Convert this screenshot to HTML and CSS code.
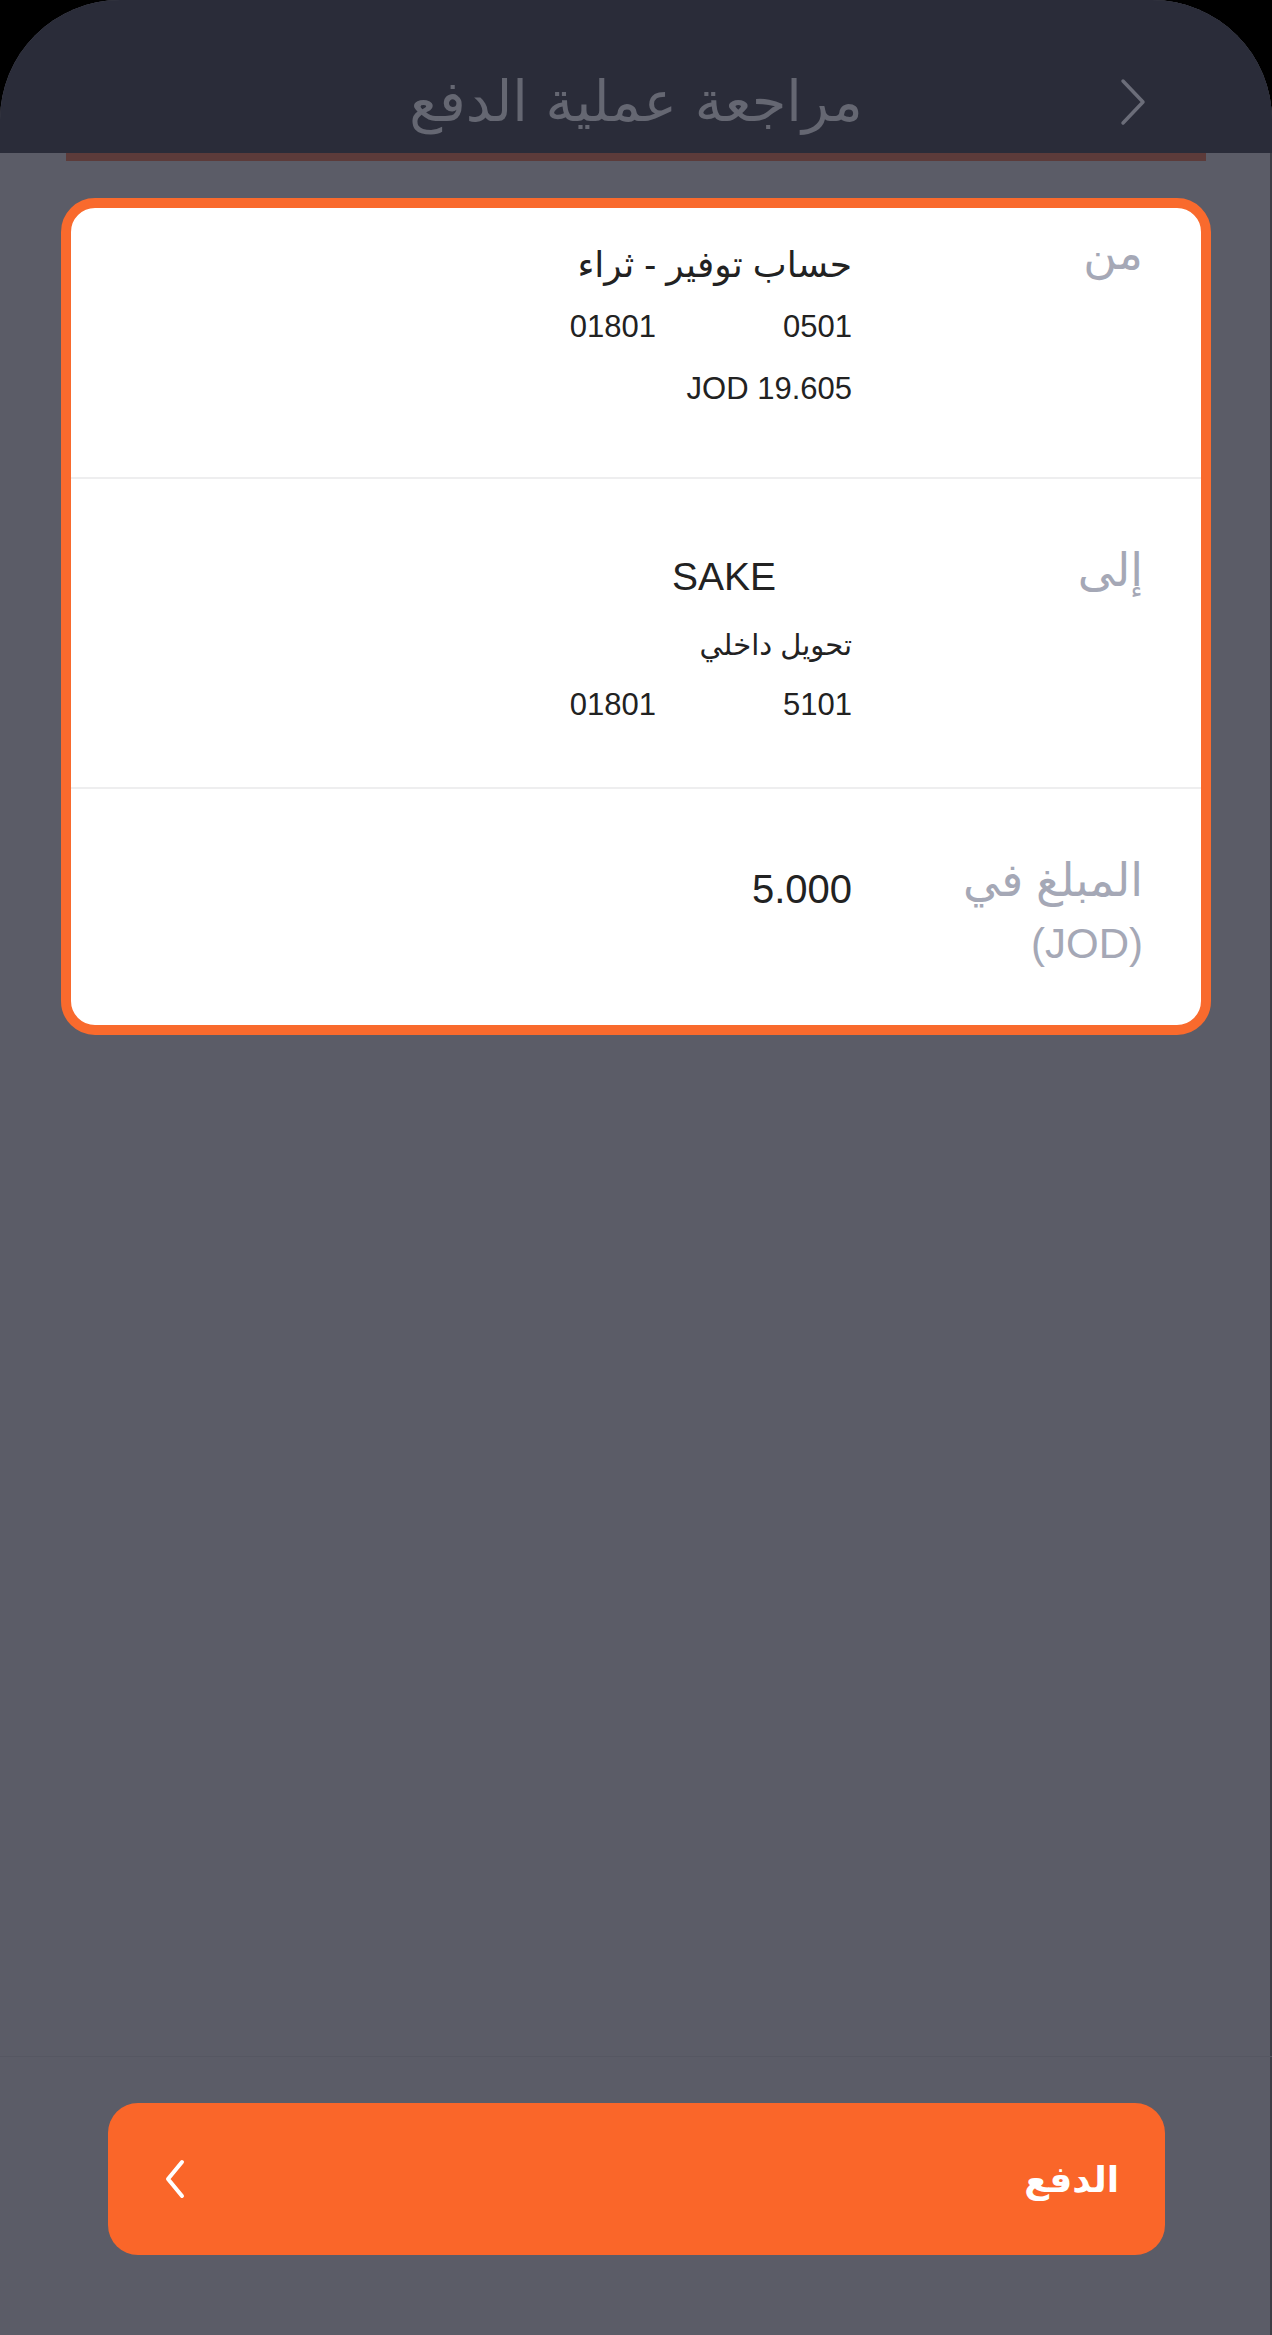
FILE: index.html
```html
<!DOCTYPE html>
<html lang="ar" dir="rtl">
<head>
    <meta charset="UTF-8">
    <meta name="viewport" content="width=device-width, initial-scale=1.0">
    <title>مراجعة عملية الدفع</title>
    <link rel="stylesheet" href="styles.css">
</head>
<body>
    <div class="phone">
        <header class="topbar">
            <span class="topbar-back">
                <svg width="30" height="50" viewBox="0 0 30 50">
                    <path d="M5 4 L25 25 L5 46" fill="none" stroke="#6b6d79" stroke-width="3.5" stroke-linecap="round" stroke-linejoin="round"/>
                </svg>
            </span>
            <h1 class="topbar-title">مراجعة عملية الدفع</h1>
            <span></span>
        </header>
        <div class="topbar-line"></div>

        <main class="content">
            <section class="review-card">
                <div class="review-row">
                    <div class="review-label label-from">من</div>
                    <div class="review-value">
                        <p class="line line-ar">حساب توفير - ثراء</p>
                        <p class="line acct"><span class="acct-branch">0501</span><span>01801</span></p>
                        <p class="line"><span dir="ltr">JOD 19.605</span></p>
                    </div>
                </div>

                <div class="review-row row-to">
                    <div class="review-label label-big">إلى</div>
                    <div class="review-value">
                        <p class="line line-name"><span class="hidden-name"></span><span dir="ltr">SAKE</span></p>
                        <p class="line line-small">تحويل داخلي</p>
                        <p class="line acct"><span class="acct-branch">5101</span><span>01801</span></p>
                    </div>
                </div>

                <div class="review-row row-amount">
                    <div class="review-label label-wrap">المبلغ في <span class="label-cur">(JOD)</span></div>
                    <div class="review-value">
                        <p class="line amount">5.000</p>
                    </div>
                </div>
            </section>
        </main>

        <footer class="pay-bar">
            <button class="pay-btn">
                <span>الدفع</span>
                <svg width="22" height="40" viewBox="0 0 22 40">
                    <path d="M18 3 L4 20 L18 37" fill="none" stroke="#ffffff" stroke-width="4" stroke-linecap="round" stroke-linejoin="round"/>
                </svg>
            </button>
        </footer>
    </div>
</body>
</html>
```

FILE: styles.css
```css
html {
    background-color: #000;
}

body {
    margin: 0;
    padding: 0;
    font-family: "Liberation Sans", "DejaVu Sans", sans-serif;
    background-color: #000;
}

.phone {
    height: 2335px;
    display: flex;
    flex-direction: column;
    background-color: #5b5c67;
    border-radius: 120px 120px 0 0;
    overflow: hidden;
    box-shadow: inset -2px 0 0 #3c3d45;
}

/* header */

.topbar {
    height: 153px;
    box-sizing: border-box;
    padding-top: 50px;
    background-color: #2a2c39;
    display: grid;
    grid-template-columns: 1fr auto 1fr;
    align-items: center;
}

.topbar-back {
    display: flex;
    padding-right: 124px;
}

.topbar-title {
    margin: 0;
    font-family: "DejaVu Sans", sans-serif;
    font-weight: normal;
    font-size: 56px;
    color: #656772;
    line-height: 70px;
}

.topbar-line {
    height: 8px;
    margin: 0 66px;
    background-color: #5c3b3a;
}

/* card */

.content {
    flex: 1;
    padding: 37px 61px 0;
}

.review-card {
    background-color: #fff;
    border: 10px solid #f96a2d;
    border-radius: 34px;
}

.review-row {
    display: grid;
    grid-template-columns: 291px 1fr;
    padding: 26px 58px 57px 20px;
}

.row-to {
    border-top: 2px solid #eeeeef;
    padding-top: 60px;
    padding-bottom: 52px;
}

.row-amount {
    border-top: 2px solid #eeeeef;
    padding-top: 60px;
    padding-bottom: 50px;
}

.review-label {
    font-size: 46px;
    line-height: 62px;
    color: #a5a8b6;
}

.label-from {
    margin-top: -12px;
}

.label-big {
    line-height: 76px;
    margin-top: -7px;
}

.label-wrap {
    max-width: 200px;
}

.label-cur {
    font-size: 42px;
}

.review-value {
    color: #222;
}

.line {
    margin: 0;
    font-size: 31px;
    line-height: 62px;
}

.line-ar {
    font-size: 36px;
}

.line-name {
    font-size: 39px;
    line-height: 76px;
}

.hidden-name {
    display: inline-block;
    width: 76px;
}

.line-small {
    font-size: 29px;
    line-height: 60px;
}

.row-to .acct {
    line-height: 60px;
}

.acct {
    display: flex;
}

.acct-branch {
    width: 196px;
}

.amount {
    font-size: 40px;
    padding-top: 9px;
}

/* bottom button */

.pay-bar {
    height: 279px;
    box-sizing: border-box;
    border-top: 1px solid #565762;
    padding: 46px 107px 0 108px;
}

.pay-btn {
    width: 100%;
    height: 152px;
    display: flex;
    justify-content: space-between;
    align-items: center;
    padding: 0 46px 0 56px;
    background-color: #fa6629;
    color: #fff;
    border: none;
    border-radius: 30px;
    font-family: "DejaVu Sans", sans-serif;
    font-weight: bold;
    font-size: 36px;
    cursor: pointer;
}
```
